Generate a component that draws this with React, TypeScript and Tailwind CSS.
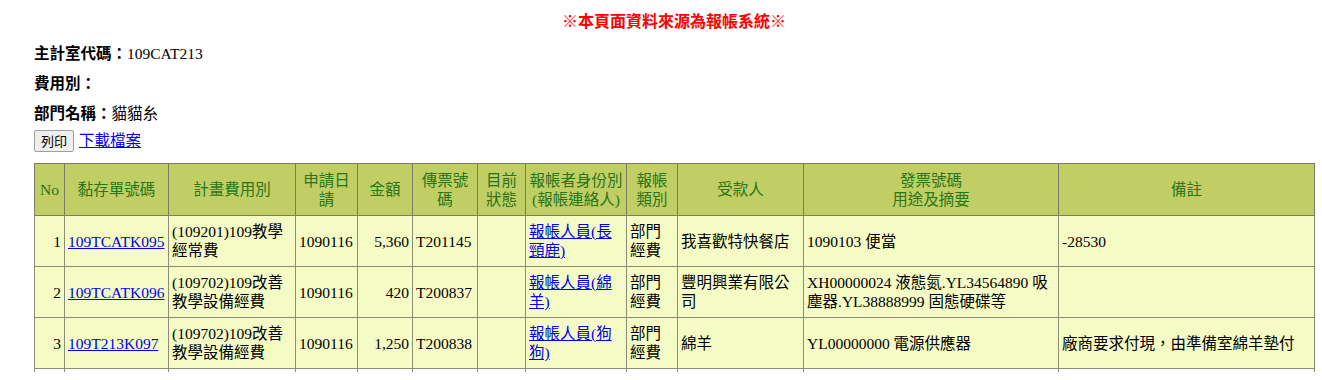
import React from "react";

const FONT = { fontFamily: '"Liberation Serif", "Noto Sans CJK TC", serif' };

const cols = [30, 104, 127, 62, 55, 65, 48, 101, 51, 126, 255, 256];

const headers: React.ReactNode[] = [
  "No",
  "黏存單號碼",
  "計畫費用別",
  <>申請日<br />請</>,
  "金額",
  <>傳票號<br />碼</>,
  <>目前<br />狀態</>,
  <>報帳者身份別<br />(報帳連絡人)</>,
  <>報帳<br />類別</>,
  "受款人",
  <>發票號碼<br />用途及摘要</>,
  "備註",
];

type Row = {
  no: string;
  id: string;
  plan: string;
  date: string;
  amt: string;
  voucher: string;
  who: string;
  payee: string;
  invoice: string;
  note: string;
  h: string;
};

const rows: Row[] = [
  {
    no: "1",
    id: "109TCATK095",
    plan: "(109201)109教學經常費",
    date: "1090116",
    amt: "5,360",
    voucher: "T201145",
    who: "報帳人員(長頸鹿)",
    payee: "我喜歡特快餐店",
    invoice: "1090103 便當",
    note: "-28530",
    h: "h-[51px]",
  },
  {
    no: "2",
    id: "109TCATK096",
    plan: "(109702)109改善教學設備經費",
    date: "1090116",
    amt: "420",
    voucher: "T200837",
    who: "報帳人員(綿羊)",
    payee: "豐明興業有限公司",
    invoice: "XH00000024 液態氮.YL34564890 吸塵器.YL38888999 固態硬碟等",
    note: "",
    h: "h-[51px]",
  },
  {
    no: "3",
    id: "109T213K097",
    plan: "(109702)109改善教學設備經費",
    date: "1090116",
    amt: "1,250",
    voucher: "T200838",
    who: "報帳人員(狗狗)",
    payee: "綿羊",
    invoice: "YL00000000 電源供應器",
    note: "廠商要求付現，由準備室綿羊墊付",
    h: "h-[51px]",
  },
];

const td = "border border-[#8c8c72] px-[3px] align-middle";

export default function App() {
  return (
    <div className="bg-white text-black text-[15.5px] leading-[19px] pl-[34px] pr-[8px] min-h-[380px]" style={FONT}>
      <div className="h-[38px] pt-[12px] text-center text-[#ff0000] font-bold text-[16px]">
        ※本頁面資料來源為報帳系統※
      </div>
      <div className="h-[30px] flex items-center">
        <b>主計室代碼：</b>
        <span>109CAT213</span>
      </div>
      <div className="h-[30px] flex items-center">
        <b>費用別：</b>
      </div>
      <div className="h-[30px] flex items-center">
        <b>部門名稱：</b>
        <span>貓貓糸</span>
      </div>
      <div className="h-[35px] flex items-start gap-[5px]">
        <button
          className="mt-[2px] h-[22px] w-[40px] border border-[#a0a0a0] rounded-[2px] bg-[#efefef] text-[13px] leading-[20px] text-black"
          style={{ fontFamily: '"Noto Sans CJK TC", sans-serif' }}
        >
          列印
        </button>
        <a href="#" className="mt-[2px] leading-[22px] text-[#0000ee] underline">
          下載檔案
        </a>
      </div>
      <table className="table-fixed border-collapse w-[1280px]">
        <colgroup>
          {cols.map((w, i) => (
            <col key={i} style={{ width: w }} />
          ))}
        </colgroup>
        <thead>
          <tr className="h-[52px] bg-[#c0ce64] text-[#2a741a]">
            {headers.map((h, i) => (
              <th key={i} className="border border-[#7c7c64] px-[1px] font-normal text-center whitespace-nowrap align-middle">
                {h}
              </th>
            ))}
          </tr>
        </thead>
        <tbody>
          {rows.map((r) => (
            <tr key={r.no} className={`${r.h} bg-[#f4fbc4]`}>
              <td className={`${td} text-right`}>{r.no}</td>
              <td className={`${td} whitespace-nowrap`}>
                <a href="#" className="text-[#0000ee] underline">{r.id}</a>
              </td>
              <td className={td}>{r.plan}</td>
              <td className={td}>{r.date}</td>
              <td className={`${td} text-right`}>{r.amt}</td>
              <td className={td}>{r.voucher}</td>
              <td className={td}></td>
              <td className={td}>
                <a href="#" className="text-[#0000ee] underline">{r.who}</a>
              </td>
              <td className={td}>部門經費</td>
              <td className={td}>{r.payee}</td>
              <td className={td}>{r.invoice}</td>
              <td className={td}>{r.note}</td>
            </tr>
          ))}
          <tr className="h-[3px] bg-white">
            {cols.map((_, i) => (
              <td key={i} className="border-x border-t border-b-0 border-[#8c8c72] p-0 h-[3px]"></td>
            ))}
          </tr>
        </tbody>
      </table>
    </div>
  );
}
